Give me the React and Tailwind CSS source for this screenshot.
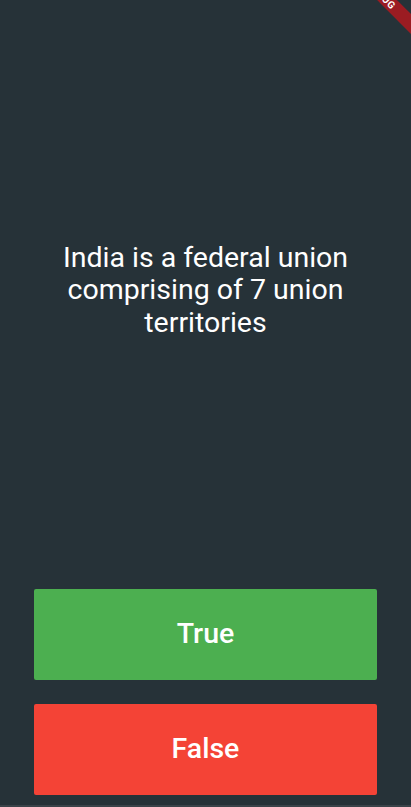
const App = () => {
  return (
    <div
      className="relative flex h-[807px] w-[411px] flex-col overflow-hidden bg-[#263238] pb-[10px] text-white"
      style={{ fontFamily: 'Roboto, "Noto Sans", sans-serif' }}
    >
      <div className="flex h-[577px] items-center justify-center px-[48px] pt-[4px]">
        <p className="text-center text-[28.5px] leading-[32.5px]">
          India is a federal union comprising of 7 union territories
        </p>
      </div>

      <div className="flex flex-col gap-[24px] px-[34px] pt-[12px]">
        <button className="flex h-[91px] w-full items-center justify-center rounded-[2px] bg-[#4caf50] text-[28.5px] font-medium">
          True
        </button>
        <button className="flex h-[91px] w-full items-center justify-center rounded-[2px] bg-[#f44336] text-[28.5px] font-medium">
          False
        </button>
      </div>

      <div className="absolute bottom-0 left-0 h-[2px] w-full bg-[#3a4349]" />

      <div className="absolute left-[332px] top-[-12px] flex h-[14px] w-[100px] rotate-45 items-center justify-center bg-[#9b1c22] text-[10px] font-bold tracking-[0.5px] text-white">
        DEBUG
      </div>
    </div>
  );
};

export default App;
